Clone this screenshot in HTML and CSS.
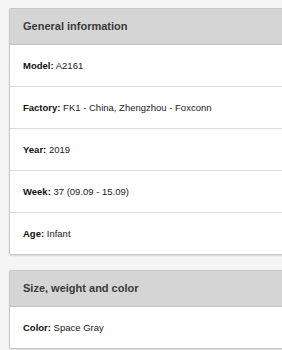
FILE: index.html
```html
<!DOCTYPE html>
<html lang="en">
<head>
  <meta charset="UTF-8" />
  <title>Device info</title>
  <link rel="stylesheet" href="styles.css">
</head>
<body>
  <div class="panel">
    <div class="panel-title">General information</div>
    <div class="panel-row"><b>Model:</b> A2161</div>
    <div class="panel-row"><b>Factory:</b> FK1 - China, Zhengzhou - Foxconn</div>
    <div class="panel-row"><b>Year:</b> 2019</div>
    <div class="panel-row"><b>Week:</b> 37 (09.09 - 15.09)</div>
    <div class="panel-row"><b>Age:</b> Infant</div>
  </div>

  <div class="panel">
    <div class="panel-title">Size, weight and color</div>
    <div class="panel-row"><b>Color:</b> Space Gray</div>
  </div>
</body>
</html>
```

FILE: styles.css
```css
body {
  margin: 0;
  padding: 8px 0 0 9px;
  background-color: #f5f5f5;
  font-family: 'Liberation Sans', Arial, sans-serif;
  color: #222;
  overflow: hidden;
}

.panel {
  width: 290px;
  margin-bottom: 15px;
  background: #fff;
  border: 1px solid #c8c8c8;
  border-radius: 2px;
  box-shadow: 0 1px 2px rgba(0, 0, 0, 0.12);
}

.panel-title {
  height: 35px;
  line-height: 35px;
  padding: 0 13px;
  background-color: #d5d5d5;
  border-bottom: 1px solid #c2c2c2;
  font-size: 11px;
  font-weight: bold;
  color: #3a3a3a;
}

.panel-row {
  padding: 15px 13px;
  line-height: 11px;
  font-size: 9.5px;
  color: #222;
  border-bottom: 1px solid #dcdcdc;
}

.panel-row:last-child {
  border-bottom: none;
}

.panel-row b {
  color: #111;
}
```
